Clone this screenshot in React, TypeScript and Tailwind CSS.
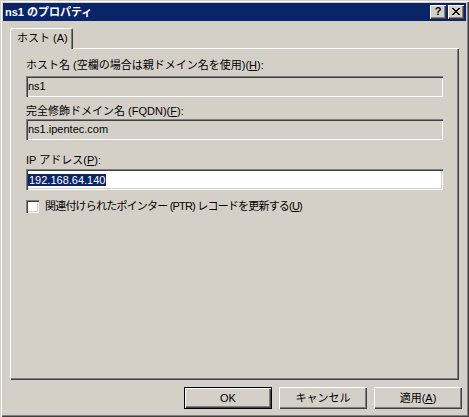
import type { ReactNode } from 'react';

const font = "font-['Liberation_Sans','Noto_Sans_CJK_JP',sans-serif]";

// raised 3D edge used by push buttons and caption buttons
const raised = 'shadow-[inset_1px_1px_0_#ffffff,inset_-1px_-1px_0_#404040,inset_-2px_-2px_0_#808080]';
// sunken edge used by edit boxes and check boxes
const sunken = 'shadow-[inset_1px_1px_0_#808080,inset_2px_2px_0_#404040,inset_-1px_-1px_0_#ffffff,inset_-2px_-2px_0_#d4d0c8]';

function Mnemonic({ text, letter }: { text: string; letter: string }) {
    return (
        <>
            {text}(<span className="underline underline-offset-[1px]">{letter}</span>)
        </>
    );
}

function FieldLabel({ children }: { children: ReactNode }) {
    return <div className="h-[13px] leading-[13px] whitespace-nowrap">{children}</div>;
}

function EditBox({ children, readOnly, className = '' }: { children: ReactNode; readOnly?: boolean; className?: string }) {
    return (
        <div
            className={`h-[21px] w-[417px] flex items-center pl-[2px] ${sunken} ${readOnly ? 'bg-[#d4d0c8]' : 'bg-white'} ${className}`}
        >
            {children}
        </div>
    );
}

function CaptionButton({ children }: { children: ReactNode }) {
    return (
        <div className={`w-[16px] h-[14px] bg-[#d4d0c8] flex items-center justify-center ${raised}`}>
            {children}
        </div>
    );
}

function PushButton({ children, isDefault }: { children: ReactNode; isDefault?: boolean }) {
    return (
        <div className={`w-[88px] h-[22px] ${isDefault ? 'border border-black' : ''}`}>
            <div className={`w-full h-full bg-[#d4d0c8] flex items-center justify-center leading-none ${raised}`}>
                {children}
            </div>
        </div>
    );
}

export default function App() {
    return (
        <div
            className={`w-[469px] h-[417px] bg-[#d4d0c8] text-[11px] text-black ${font} p-[3px] shadow-[inset_1px_1px_0_#d4d0c8,inset_2px_2px_0_#ffffff,inset_-1px_-1px_0_#404040,inset_-2px_-2px_0_#808080]`}
        >
            {/* caption */}
            <div className="h-[18px] bg-[#0a246a] flex items-center justify-between pl-[2px] pr-[2px]">
                <span className="text-white font-bold text-[11px] leading-none whitespace-nowrap">ns1 のプロパティ</span>
                <div className="flex gap-[2px]">
                    <CaptionButton>
                        <span className="font-bold text-[11px] leading-none -mt-px">?</span>
                    </CaptionButton>
                    <CaptionButton>
                        <svg width="8" height="7" viewBox="0 0 8 7" className="-mt-px" shapeRendering="crispEdges">
                            <path d="M0 0h2v1h-2zM6 0h2v1h-2zM1 1h2v1h-2zM5 1h2v1h-2zM2 2h4v1h-4zM3 3h2v1h-2zM2 4h4v1h-4zM1 5h2v1h-2zM5 5h2v1h-2zM0 6h2v1h-2zM6 6h2v1h-2z" fill="#000" />
                        </svg>
                    </CaptionButton>
                </div>
            </div>

            {/* tab strip */}
            <div className="ml-[7px] mt-[7px]">
                <div
                    className="relative z-10 w-[63px] h-[21px] bg-[#d4d0c8] rounded-t-[2px] pl-[7px] pt-[4px] leading-[13px] whitespace-nowrap shadow-[inset_1px_1px_0_#ffffff,inset_-1px_0_0_#404040,inset_-2px_0_0_#808080]"
                >
                    ホスト (A)
                </div>
                <div className={`-mt-px w-[449px] h-[332px] pl-[16px] pt-[11px] ${raised}`}>
                    <FieldLabel>
                        <Mnemonic text="ホスト名 (空欄の場合は親ドメイン名を使用)" letter="H" />:
                    </FieldLabel>
                    <EditBox readOnly className="mt-[4px]">ns1</EditBox>

                    <div className="mt-[8px]">
                        <FieldLabel>
                            <Mnemonic text="完全修飾ドメイン名 (FQDN)" letter="F" />:
                        </FieldLabel>
                    </div>
                    <EditBox readOnly className="mt-[1px]">ns1.ipentec.com</EditBox>

                    <div className="mt-[14px]">
                        <FieldLabel>
                            <Mnemonic text="IP アドレス" letter="P" />:
                        </FieldLabel>
                    </div>
                    <EditBox className="mt-[2px]">
                        <span className="bg-[#0a246a] text-white leading-[12px] px-px">192.168.64.140</span>
                    </EditBox>

                    <div className="mt-[10px] flex items-center gap-[6px]">
                        <div className={`w-[13px] h-[13px] bg-white ${sunken}`} />
                        <span className="leading-[13px] whitespace-nowrap tracking-[-0.8px]">
                            <Mnemonic text="関連付けられたポインター (PTR) レコードを更新する" letter="U" />
                        </span>
                    </div>
                </div>
            </div>

            {/* dialog buttons */}
            <div className="mt-[7px] flex justify-end gap-[7px] pr-[4px]">
                <PushButton isDefault>OK</PushButton>
                <PushButton>キャンセル</PushButton>
                <PushButton>
                    <Mnemonic text="適用" letter="A" />
                </PushButton>
            </div>
        </div>
    );
}
